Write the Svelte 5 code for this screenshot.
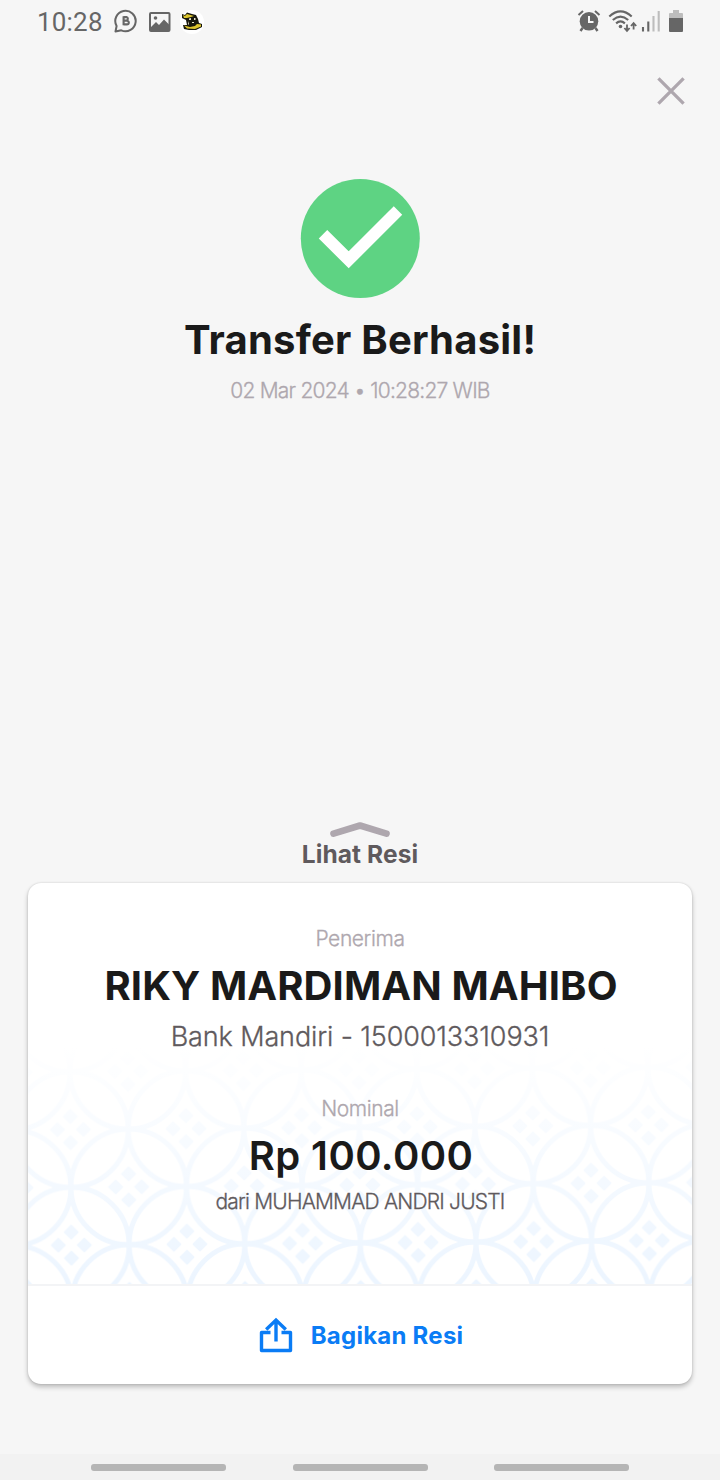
<script lang="ts">
  const transfer = {
    time: '02 Mar 2024 • 10:28:27 WIB',
    recipient: 'RIKY MARDIMAN MAHIBO',
    account: 'Bank Mandiri - 1500013310931',
    amount: 'Rp 100.000',
    sender: 'dari MUHAMMAD ANDRI JUSTI',
  };

  // Batik tile: one full ring in the middle, one on every corner
  const TILE = 115.6;
  const HALF = TILE / 2;
  const rings = [[HALF, HALF], [0, 0], [TILE, 0], [0, TILE], [TILE, TILE]];
  const gems = [[0, -13], [13, 0], [0, 13], [-13, 0]];
</script>

<div class="screen">
  <header class="status">
    <div class="status-left">
      <span class="clock">10:28</span>
      <svg class="chat" width="24" height="24" viewBox="0 0 24 24">
        <path d="M1.5 22.5L2.6 17A10.2 10.2 0 1 1 7.3 21.3Z" fill="none" stroke="#666" stroke-width="2" stroke-linejoin="round" />
        <path d="M9.6 7.3V16.2M9.6 8.1H12.5A1.8 1.8 0 0 1 12.5 11.6H9.6H12.9A1.9 1.9 0 0 1 12.9 15.4H9.6" fill="none" stroke="#666" stroke-width="2.1" />
      </svg>
      <svg class="photo" width="22" height="20" viewBox="0 0 22 20">
        <rect x="1" y="1" width="19.5" height="18" rx="1" fill="none" stroke="#666" stroke-width="2" />
        <path d="M2 15L7 10L10 13L15 7.5L20 12.5V19H2Z" fill="#666" />
        <circle cx="6.5" cy="6" r="1.8" fill="#666" />
      </svg>
      <svg class="avatar" width="24" height="24" viewBox="0 0 24 24">
        <circle cx="12" cy="12" r="12" fill="#fff" />
        <path d="M2 4L5 5L7 2.5L12 4L16 5L18 9L19 13L22 14L22 17L16 20L9 20L4 19L3 15L7 15L6 10L2 8Z" fill="#17170d" />
        <path d="M3 5L5 6L7 4L14 6L11 7L7 8L4 8ZM4 15.5L10 17L15 16L17 14L21 14.5L21 16.5L15 19L7 18.5Z" fill="#dcc52d" />
        <path d="M9 8.5L11 8V10H9ZM14 8H15.5V10H14ZM8 11L9 14L8 15ZM12 12H14V13H12Z" fill="#e8e4c8" />
      </svg>
    </div>
    <div class="status-right">
      <svg class="alarm" width="24" height="24" viewBox="0 0 24 24">
        <path d="M1.5 6L6 2M22.5 6L18 2" stroke="#666" stroke-width="2" />
        <path d="M5.5 19L3.5 22M18.5 19L20.5 22" stroke="#666" stroke-width="2.4" />
        <circle cx="12" cy="12.3" r="9.3" fill="#666" />
        <path d="M12 7V13H16.5" fill="none" stroke="#f6f6f6" stroke-width="2" />
      </svg>
      <svg class="wifi" width="30" height="24" viewBox="0 0 30 24">
        <g fill="none" stroke="#666" stroke-width="2.1">
          <path d="M1.3 7.5Q12.5 -2.7 23.7 7.5" />
          <path d="M4.8 11Q12.5 4.3 20.2 11" />
          <path d="M8.1 14.4Q12.5 10.5 16.9 14.4" />
        </g>
        <circle cx="12.5" cy="17.5" r="1.8" fill="#666" />
        <path d="M19 15.5V21.5M16.4 19L19 22L21.6 19M25.6 20.5V14.5M23 17L25.6 14L28.2 17" fill="none" stroke="#666" stroke-width="1.8" />
      </svg>
      <svg class="signal" width="20" height="21" viewBox="0 0 20 21">
        <path d="M2 16V20.5M7.3 10.5V20.5" stroke="#666" stroke-width="2.1" />
        <path d="M12.5 5V20.5M17.7 0V20.5" stroke="#bdbdbd" stroke-width="2.1" />
      </svg>
      <svg class="battery" width="14" height="22" viewBox="0 0 14 22">
        <path d="M4 0H10V3H13Q14 3 14 4V8H0V4Q0 3 1 3H4Z" fill="#bdbdbd" />
        <path d="M0 8H14V21Q14 22 13 22H1Q0 22 0 21Z" fill="#666" />
      </svg>
    </div>
  </header>

  <div class="toolbar">
    <button class="close" aria-label="Tutup">
      <svg width="28" height="28" viewBox="0 0 28 28">
        <path d="M1.4 1.4L26.6 26.6M26.6 1.4L1.4 26.6" stroke="#aea7ae" stroke-width="3.3" />
      </svg>
    </button>
  </div>

  <section class="result">
    <svg width="120" height="120" viewBox="0 0 120 120">
      <circle cx="60.3" cy="59.5" r="59.5" fill="#5ed383" />
      <path d="M23 55.3L48.7 80.8L98 31.5" fill="none" stroke="#fff" stroke-width="12" />
    </svg>
    <h1>Transfer Berhasil!</h1>
    <p class="time">{transfer.time}</p>
  </section>

  <button class="see">
    <svg width="62" height="17" viewBox="0 0 62 17">
      <path d="M4.5 12.7L31 4.5L57.5 12.7" fill="none" stroke="#aea7ae" stroke-width="6.6" stroke-linecap="round" stroke-linejoin="round" />
    </svg>
    <span>Lihat Resi</span>
  </button>

  <article class="card">
    <div class="details">
      <svg class="batik" width="664" height="250">
        <defs>
          <pattern id="tile" width={TILE} height={TILE} patternUnits="userSpaceOnUse" patternTransform="translate(-15.8 38.2) rotate(-0.45)">
            {#each rings as [x, y]}
              <circle cx={x} cy={y} r={HALF} fill="none" stroke="#ecf5ff" stroke-width="5" />
              {#each gems as [dx, dy]}
                <rect x={x + dx - 5.5} y={y + dy - 5.5} width="11" height="11" rx="1" fill="#ecf5ff" transform="rotate(45 {x + dx} {y + dy})" />
              {/each}
            {/each}
          </pattern>
          <linearGradient id="fade" x2="0" y2="1">
            <stop offset="0.05" stop-color="#fff" />
            <stop offset="1" stop-color="#fff" stop-opacity="0" />
          </linearGradient>
        </defs>
        <rect width="664" height="250" fill="url(#tile)" />
        <rect width="664" height="250" fill="url(#fade)" />
      </svg>
      <p class="label">Penerima</p>
      <h2 class="name">{transfer.recipient}</h2>
      <p class="account">{transfer.account}</p>
      <p class="label nominal">Nominal</p>
      <h2 class="amount">{transfer.amount}</h2>
      <p class="sender">{transfer.sender}</p>
    </div>
    <button class="share">
      <svg width="34" height="36" viewBox="0 0 34 36">
        <path d="M11.5 15.5H2.5V33.5H31.5V15.5H22.5" fill="none" stroke="#0a7cf5" stroke-width="3.4" stroke-linejoin="round" />
        <path d="M17 24.5V3M7.2 12.4L17 3L26.8 12.4" fill="none" stroke="#0a7cf5" stroke-width="3.4" />
      </svg>
      <span>Bagikan Resi</span>
    </button>
  </article>

  <nav class="navbar">
    <i></i><i></i><i></i>
  </nav>
</div>

<style>
  :global(body) {
    margin: 0;
    background: #f6f6f6;
  }
  .screen {
    display: flex; flex-direction: column;
    width: 720px; height: 1480px;
    overflow: hidden;
    background: #f6f6f6;
    color: #1a1a1a;
    font-family: Inter, 'Liberation Sans', sans-serif;
  }
  svg { display: block; flex: none; }
  h1, h2, p { margin: 0; white-space: nowrap; }
  button {
    padding: 0; border: 0;
    background: none;
    font-family: inherit;
  }

  /* Status bar */
  .status {
    display: flex; justify-content: space-between;
    height: 44px;
    padding: 0 37px;
    box-sizing: border-box;
  }
  .status-left, .status-right { display: flex; align-items: flex-start; }
  .clock {
    width: 77px;
    font: 26px/44px Roboto, sans-serif;
    letter-spacing: 0.2px;
    color: #666;
  }
  .chat { margin-top: 9px; }
  .photo { margin: 12px 0 0 11px; }
  .avatar { margin: 10px 0 0 9px; }
  .alarm { margin-top: 9px; }
  .wifi { margin: 9px 0 0 7px; }
  .signal { margin: 11px 0 0 3px; }
  .battery { margin: 10px 0 0 8px; }

  .toolbar {
    display: flex; justify-content: flex-end;
    padding: 33px 35px 0 0;
    height: 102px;
  }
  .close { height: 28px; }

  .result {
    display: flex; flex-direction: column; align-items: center;
    height: 642px;
  }
  h1 {
    margin-top: 16px;
    font-size: 40px; line-height: 50px; font-weight: 700;
    letter-spacing: 0.22px;
  }

  /* Light face with a thin outline, for a book weight */
  .time, .label, .account, .sender {
    font-weight: 300;
    -webkit-text-stroke: 0.3px currentColor;
  }
  .time {
    margin-top: 14px;
    font-size: 21px; line-height: 24px;
    letter-spacing: -0.78px;
    color: #aea7ae;
  }

  .see {
    display: flex; flex-direction: column; align-items: center;
    height: 62px;
    font-size: 24.5px; line-height: 32px; font-weight: 700;
    letter-spacing: 0.1px;
    color: #5f5a5d;
  }

  /* Receipt */
  .card {
    display: flex; flex-direction: column;
    margin: 0 28px;
    height: 501px;
    border-radius: 13px;
    background: #fff;
    box-shadow: 0 3px 5px rgba(0, 0, 0, 0.24), 0 0 2px rgba(0, 0, 0, 0.16);
  }
  .details {
    position: relative;
    display: flex; flex-direction: column; align-items: center;
    height: 401px;
    border-bottom: 2px solid #f3f4f6;
  }
  .batik {
    position: absolute;
    left: 0; bottom: 0;
  }
  .details p, .details h2 { position: relative; }
  .label {
    margin-top: 44px;
    font-size: 21px; line-height: 24px;
    letter-spacing: -0.4px;
    color: #aea7ae;
  }
  .name {
    margin: 10px 0 0 2px;
    font-size: 40px; line-height: 50px; font-weight: 700;
    letter-spacing: 0.1px;
  }
  .account {
    margin-top: 9px;
    font-size: 27px; line-height: 34px;
    letter-spacing: -0.12px;
    color: #5f5a5d;
  }
  .nominal { margin-top: 43px; }
  .amount {
    margin: 10px 0 0 2px;
    font-size: 40px; line-height: 50px; font-weight: 600;
    letter-spacing: 0.4px;
  }
  .sender {
    margin-top: 9px;
    font-size: 21px; line-height: 24px;
    letter-spacing: -0.8px;
    color: #5f5a5d;
  }
  .share {
    display: flex; align-items: center; justify-content: center;
    gap: 18px;
    height: 98px;
    padding-left: 2px;
    font-size: 24px; font-weight: 700;
    letter-spacing: 0.25px;
    color: #0a7cf5;
  }

  .navbar {
    display: flex; justify-content: center; align-items: center;
    gap: 66.5px;
    height: 26px;
    margin-top: auto;
    background: #f2f2f2;
  }
  .navbar i {
    width: 135px; height: 7px;
    border-radius: 3px;
    background: #b5b5b5;
  }
</style>
